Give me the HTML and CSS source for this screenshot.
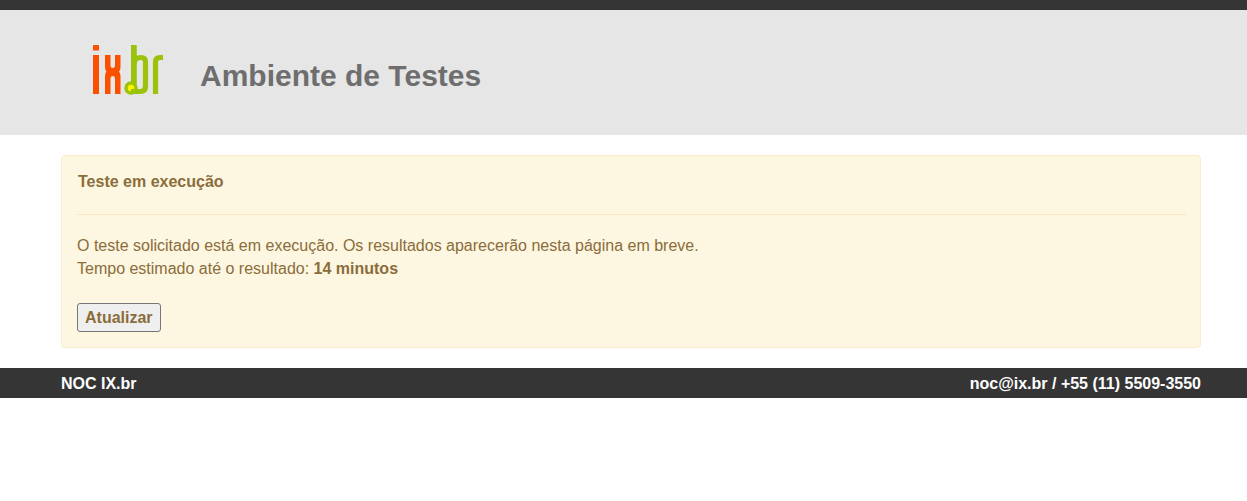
FILE: index.html
```html
<!DOCTYPE html>
<html lang="pt-BR">
<head>
  <meta charset="UTF-8">
  <title>Ambiente de Testes</title>
  <link rel="stylesheet" href="styles.css">
</head>
<body>
  <div class="topbar"></div>
  <header class="header">
    <svg class="logo" width="90" height="60" viewBox="0 0 90 60">
      <!-- i -->
      <path d="M3 5h6v5.500h-6zM3 15h6v39h-6z" fill="#fb5000"/>
      <!-- x -->
      <path d="M15 15h5.500v10q0 3 2.300 3q2.200 0 2.200-3v-10h5.500v12q0 3-1.500 4.500q1.500 1.500 1.500 4.500v18h-5.500v-15q0-3-2.200-3q-2.300 0-2.300 3v15h-5.500v-18q0-3 1.500-4.500q-1.500-1.500-1.500-4.500z" fill="#fb5000"/>
      <!-- b -->
      <path d="M43.900 5v43" fill="none" stroke="#9bc30c" stroke-width="5.800"/>
      <circle cx="41" cy="48" r="5" fill="#fff200" stroke="#9bc30c" stroke-width="3.500"/>
      <path d="M41 51.500h9.500q5 0 5-5v-24.500q0-4.500-4.500-4.500q-7 0-7 7" fill="none" stroke="#9bc30c" stroke-width="5.200"/>
      <!-- r -->
      <path d="M65.500 54v-32q0-4.500 4.500-4.500h3" fill="none" stroke="#9bc30c" stroke-width="5.200"/>
    </svg>
    <h1 class="title">Ambiente de Testes</h1>
  </header>
  <main class="content">
    <div class="alert">
      <h4 class="alert-title">Teste em execução</h4>
      <hr class="alert-rule">
      <p class="alert-text">O teste solicitado está em execução. Os resultados aparecerão nesta página em breve.<br>Tempo estimado até o resultado: <strong>14 minutos</strong></p>
      <button class="refresh" type="button">Atualizar</button>
    </div>
  </main>
  <footer class="footer">
    <div class="footer-inner">
      <span>NOC IX.br</span>
      <span>noc@ix.br / +55 (11) 5509-3550</span>
    </div>
  </footer>
</body>
</html>
```

FILE: styles.css
```css
body {
  margin: 0;
  font-family: "Liberation Sans", Arial, sans-serif;
  font-size: 16px;
  line-height: 23px;
  color: #333;
  background-color: #fff;
}
.topbar {
  height: 10px;
  background-color: #353535;
}
.header {
  height: 125px;
  display: flex;
  align-items: center;
  padding-left: 90px;
  background-color: #e6e6e6;
}
.logo {
  flex: none;
  margin: 0 20px 6px 0;
}
.title {
  margin: 6px 0 0;
  font-size: 30px;
  line-height: 36px;
  font-weight: bold;
  color: #6e6e6e;
}
.content {
  width: 1140px;
  margin: 20px 0 20px 61px;
}
.alert {
  box-sizing: border-box;
  height: 193px;
  padding: 14px 15px 15px;
  background-color: #fdf6e1;
  border: 1px solid #faebcc;
  border-radius: 4px;
  color: #8a6d3b;
}
.alert-title {
  margin: 0;
  padding-left: 1px;
  font-size: 16px;
  line-height: 23px;
  font-weight: bold;
}
.alert-rule {
  margin: 21px -1px 19px 0;
  border: none;
  border-top: 1px solid #f9e6c3;
}
.alert-text {
  margin: 0 0 23px;
}
.refresh {
  height: 29px;
  padding: 0 7px;
  font-family: inherit;
  font-size: 16px;
  font-weight: bold;
  color: inherit;
  background-color: #efefef;
  border: 1px solid #767676;
  border-radius: 3px;
}
.footer {
  height: 30px;
  background-color: #353535;
}
.footer-inner {
  width: 1140px;
  margin-left: 61px;
  display: flex;
  justify-content: space-between;
  font-weight: bold;
  line-height: 31px;
  color: #fff;
}
```
